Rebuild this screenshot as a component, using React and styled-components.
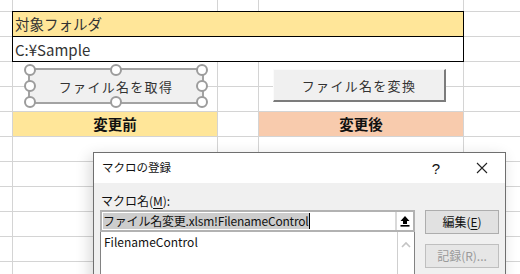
import React from 'react'
import styled, { createGlobalStyle } from 'styled-components'

const GlobalStyle = createGlobalStyle`
    html, body {
        margin: 0;
        padding: 0;
        background: #ffffff;
        overflow: hidden;
    }
    body {
        font-family: "Noto Sans CJK JP", "Noto Sans", sans-serif;
        color: #222;
    }
`

const FILL = {
    yellow: '#ffe699',
    peach: '#f8cbad',
    white: '#ffffff',
}

const rows = [
    [{}, {}, {}, {}, {}],
    [{}, { span: 3, fill: 'yellow', boxed: true, text: '対象フォルダ' }, {}],
    [{}, { span: 3, boxed: true, text: 'C:¥Sample', latin: true }, {}],
    [{}, {}, {}, {}, {}],
    [{}, {}, {}, {}, {}],
    [{}, { fill: 'yellow', head: true, text: '変更前' }, {}, { fill: 'peach', head: true, text: '変更後' }, {}],
    [{}, {}, {}, {}, {}],
    [{}, {}, {}, {}, {}],
    [{}, {}, {}, {}, {}],
    [{}, {}, {}, {}, {}],
    [{}, {}, {}, {}, {}],
    [{}, {}, {}, {}, {}],
]

function Handles() {
    const spots = []
    ;['0%', '50%', '100%'].forEach(y => {
        ;['0%', '50%', '100%'].forEach(x => {
            if (!(x === '50%' && y === '50%')) spots.push([x, y])
        })
    })
    return spots.map(([x, y]) => <Handle key={x + y} $x={x} $y={y} />)
}

function UpArrow() {
    return (
        <svg width="12" height="12" viewBox="0 0 12 12">
            <path d="M6 1 L1.5 6 H4 V9 H8 V6 H10.5 Z" fill="#000" />
            <rect x="1.5" y="10" width="9" height="1.6" fill="#000" />
        </svg>
    )
}

function CloseIcon() {
    return (
        <svg width="12" height="12" viewBox="0 0 12 12">
            <path d="M1 1 L11 11 M11 1 L1 11" stroke="#222" strokeWidth="1.1" />
        </svg>
    )
}

function Chevron() {
    return (
        <svg width="10" height="7" viewBox="0 0 10 7">
            <path d="M1 6 L5 2 L9 6" stroke="#c4c4c4" strokeWidth="1.6" fill="none" />
        </svg>
    )
}

export default function App() {
    return (
        <Page>
            <GlobalStyle />
            <Sheet>
                {rows.map((row, r) =>
                    row.map((cell, c) => (
                        <Cell
                            key={r + '-' + c}
                            $span={cell.span || 1}
                            $fill={FILL[cell.fill || 'white']}
                            $boxed={cell.boxed}
                            $head={cell.head}
                            $latin={cell.latin}
                        >
                            {cell.text}
                        </Cell>
                    ))
                )}
            </Sheet>

            <SelectedButton>
                ファイル名を取得
                <Handles />
            </SelectedButton>
            <RaisedButton>ファイル名を変換</RaisedButton>

            <Dialog>
                <TitleBar>
                    <Title>マクロの登録</Title>
                    <TitleTools>
                        <HelpMark>?</HelpMark>
                        <CloseBox><CloseIcon /></CloseBox>
                    </TitleTools>
                </TitleBar>
                <Body>
                    <Label>マクロ名(<u>M</u>):</Label>
                    <Columns>
                        <LeftColumn>
                            <RefInput>
                                <Selected>ファイル名変更.xlsm!FilenameControl</Selected>
                                <Caret />
                                <Collapse><UpArrow /></Collapse>
                            </RefInput>
                            <ListBox>
                                <ListItems>
                                    <Item>FilenameControl</Item>
                                </ListItems>
                                <ScrollBar><Chevron /></ScrollBar>
                            </ListBox>
                        </LeftColumn>
                        <RightColumn>
                            <DialogButton>編集(<u>E</u>)</DialogButton>
                            <DialogButton $disabled>記録(R)...</DialogButton>
                        </RightColumn>
                    </Columns>
                </Body>
            </Dialog>
        </Page>
    )
}

const Page = styled.div`
    position: relative;
    width: 520px;
    height: 274px;
    overflow: hidden;
`

const Sheet = styled.div`
    display: grid;
    grid-template-columns: 12px 204px 40px 204px 1fr;
    grid-auto-rows: 24px;
    gap: 1px;
    margin-top: -13px;
    background: #d4d4d4;
`

const Cell = styled.div`
    grid-column: span ${p => p.$span};
    display: flex;
    align-items: center;
    justify-content: ${p => (p.$head ? 'center' : 'flex-start')};
    padding-left: ${p => (p.$head ? '0' : '2px')};
    background: ${p => p.$fill};
    outline: ${p => (p.$boxed ? '1px solid #000' : 'none')};
    font-size: ${p => (p.$latin ? '15px' : '14.5px')};
    font-weight: ${p => (p.$head ? 700 : 400)};
    color: ${p => (p.$head ? '#111' : '#333')};
    line-height: 1;
    white-space: nowrap;
`

const BaseButton = styled.div`
    position: absolute;
    display: flex;
    align-items: center;
    justify-content: center;
    box-sizing: border-box;
    background: #f0f0f0;
    font-size: 13px;
    letter-spacing: 1.3px;
    color: #333;
    line-height: 1;
`

const SelectedButton = styled(BaseButton)`
    left: 28px;
    top: 68px;
    width: 176px;
    height: 36px;
    border: 2px solid #a3a3a3;
`

const Handle = styled.span`
    position: absolute;
    left: ${p => p.$x};
    top: ${p => p.$y};
    width: 8px;
    height: 8px;
    margin: -6px 0 0 -6px;
    border: 2px solid #9c9c9c;
    border-radius: 50%;
    background: #fff;
`

const RaisedButton = styled(BaseButton)`
    left: 273px;
    top: 69px;
    width: 173px;
    height: 33px;
    border-top: 1px solid #fbfbfb;
    border-left: 1px solid #fbfbfb;
    border-right: 2px solid #7c7c7c;
    border-bottom: 2px solid #7c7c7c;
`

const Dialog = styled.div`
    position: absolute;
    left: 93px;
    top: 152px;
    width: 413px;
    height: 150px;
    box-sizing: border-box;
    border: 1px solid #6f6f6f;
    background: #f0f0f0;
    box-shadow: -3px 4px 14px rgba(0, 0, 0, 0.16);
    font-size: 12px;
    color: #111;
`

const TitleBar = styled.div`
    display: flex;
    align-items: center;
    justify-content: space-between;
    height: 30px;
    background: #fff;
`

const Title = styled.div`
    padding-left: 8px;
    font-size: 11.5px;
    line-height: 1;
`

const TitleTools = styled.div`
    display: flex;
    align-items: center;
    height: 100%;
`

const HelpMark = styled.div`
    width: 46px;
    text-align: center;
    font-family: "Liberation Sans", sans-serif;
    font-size: 15px;
    line-height: 1;
`

const CloseBox = styled.div`
    display: flex;
    align-items: center;
    justify-content: center;
    width: 46px;
`

const Body = styled.div`
    padding: 9px 0 0 6px;
`

const Label = styled.div`
    height: 18px;
    line-height: 18px;
    padding-left: 1px;
    font-size: 12px;

    u {
        text-underline-offset: 2px;
    }
`

const Columns = styled.div`
    display: flex;
    align-items: flex-start;
    gap: 10px;
`

const LeftColumn = styled.div`
    display: flex;
    flex-direction: column;
    width: 315px;
`

const RefInput = styled.div`
    display: flex;
    align-items: center;
    box-sizing: border-box;
    height: 22px;
    padding-left: 1px;
    border: 2px solid #b2b2b2;
    background: #fff;
`

const Selected = styled.span`
    display: flex;
    align-items: center;
    height: 16px;
    background: #cdcdcd;
    font-size: 12px;
    letter-spacing: -0.2px;
    line-height: 1;
    white-space: nowrap;
`

const Caret = styled.span`
    width: 1px;
    height: 16px;
    background: #000;
`

const Collapse = styled.div`
    display: flex;
    align-items: center;
    justify-content: center;
    width: 16px;
    height: 18px;
    margin-left: auto;
    background: #fff;
    border-left: 2px solid #d9d9d9;
`

const ListBox = styled.div`
    display: flex;
    height: 60px;
    box-sizing: border-box;
    border: 1px solid #828282;
    border-top: none;
    background: #fff;
`

const ListItems = styled.div`
    flex: 1;
    padding: 2px 3px;
`

const Item = styled.div`
    font-size: 12px;
    line-height: 16px;
`

const ScrollBar = styled.div`
    display: flex;
    justify-content: center;
    width: 16px;
    padding-top: 9px;
    border-left: 1px solid #cfcfcf;
    background: #fff;
`

const RightColumn = styled.div`
    display: flex;
    flex-direction: column;
    gap: 10px;
`

const DialogButton = styled.div`
    display: flex;
    align-items: center;
    justify-content: center;
    box-sizing: border-box;
    width: 74px;
    height: 24px;
    border: 1px solid ${p => (p.$disabled ? '#bfbfbf' : '#adadad')};
    background: ${p => (p.$disabled ? '#e6e6e6' : '#e1e1e1')};
    color: ${p => (p.$disabled ? '#9a9a9a' : '#111')};
    font-size: 12px;
    line-height: 1;

    u {
        text-underline-offset: 2px;
    }
`
